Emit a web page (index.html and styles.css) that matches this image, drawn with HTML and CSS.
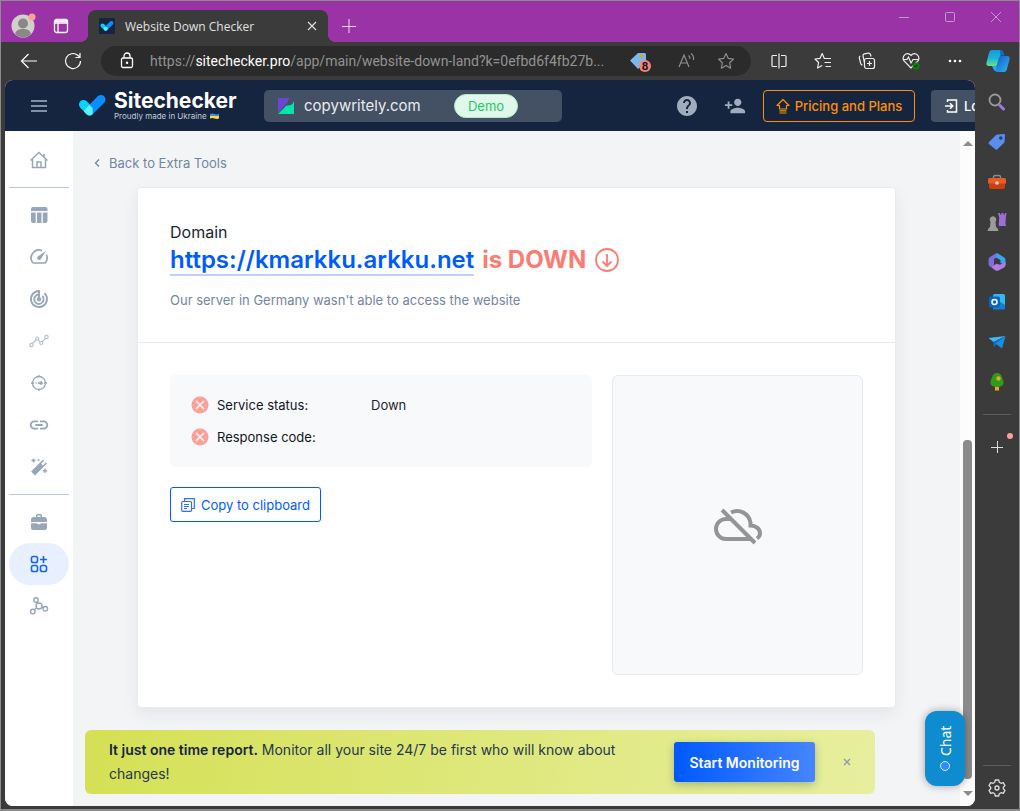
FILE: index.html
```html
<!DOCTYPE html>
<html lang="en">
<head>
  <meta charset="UTF-8">
  <meta name="viewport" content="width=device-width, initial-scale=1.0">
  <title>Website Down Checker</title>
  <link rel="stylesheet" href="styles.css">
</head>
<body>
<div class="window">
  <header class="titlebar">
    <button class="profile" aria-label="Profile">
      <svg width="26" height="26" viewBox="0 0 26 26"><circle cx="12" cy="14" r="11.500" fill="#d2d0cc"/><circle cx="12" cy="11.500" r="5" fill="#8a8886"/><path d="M4 22c1-4 4-5 8-5s7 1 8 5a11.500 11.500 0 0 1-16 0z" fill="#8a8886"/><circle cx="21" cy="5" r="3.500" fill="#f9a19a"/></svg>
    </button>
    <button class="workspaces" aria-label="Tab actions">
      <svg width="16" height="16" viewBox="0 0 16 16" fill="none" stroke="#fff" stroke-width="1.300"><rect x="1.500" y="1.500" width="13" height="13" rx="2"/><path d="M1.500 5h13M5 5v9.500"/><path d="M2 3.200h12" stroke-width="2"/></svg>
    </button>
    <div class="tab">
      <svg width="16" height="16" viewBox="0 0 16 16"><rect width="16" height="16" rx="1" fill="#15253f"/><path d="M3.500 7.500l3 3" stroke="#00d5ff" stroke-width="4" stroke-linecap="round"/><path d="M6.800 10.600l5.600-5.600" stroke="#0a8dff" stroke-width="4" stroke-linecap="round"/><circle cx="6.700" cy="10.700" r="2" fill="#5ff0ff"/></svg>
      <span class="tab-title">Website Down Checker</span>
      <button aria-label="Close tab"><svg width="10" height="10" viewBox="0 0 10 10" stroke="#ddd" stroke-width="1.200"><path d="M1 1l8 8M9 1l-8 8"/></svg></button>
    </div>
    <button class="new-tab" aria-label="New tab"><svg width="14" height="14" viewBox="0 0 14 14" stroke="#f5dcf8"><path d="M7 0v14M0 7.500h14"/></svg></button>
    <div class="window-buttons">
      <button aria-label="Minimize"><svg width="12" height="12" viewBox="0 0 12 12" stroke="#cb93d2"><path d="M1 6.500h10"/></svg></button>
      <button aria-label="Maximize"><svg width="12" height="12" viewBox="0 0 12 12" fill="none" stroke="#cb93d2"><rect x="1.500" y="1.500" width="9" height="9" rx="1"/></svg></button>
      <button aria-label="Close"><svg width="12" height="12" viewBox="0 0 12 12" stroke="#cb93d2"><path d="M1 1l10 10M11 1L1 11"/></svg></button>
    </div>
  </header>

  <nav class="toolbar">
    <button aria-label="Back"><svg width="18" height="18" viewBox="0 0 18 18" fill="none" stroke="#fff" stroke-width="1.200"><path d="M17 9H1.500M8.500 2l-7 7 7 7"/></svg></button>
    <button aria-label="Refresh"><svg width="18" height="18" viewBox="0 0 18 18" fill="none" stroke="#fff" stroke-width="1.200"><path d="M16.500 9a7.500 7.500 0 1 1-2.800-5.800l2 1.800M16 1v4.500h-4.500"/></svg></button>
    <div class="address">
      <svg class="lock" width="14" height="18" viewBox="0 0 14 18" fill="none" stroke="#fff" stroke-width="1.300"><rect x="1.500" y="6" width="11" height="9.500" rx="1.500"/><path d="M4 6V4a3 3 0 0 1 6 0v2"/><circle cx="7" cy="10.800" r=".6" fill="#fff"/></svg>
      <div class="url">https://<b>sitechecker.pro</b>/app/main/website-down-land?k=0efbd6f4fb27b...</div>
      <button class="coupon" aria-label="Shopping">
        <svg width="22" height="20" viewBox="0 0 22 20"><path d="M1 9.500l8-7.500h7l1 1v8l-8 7z" fill="#7fb6ea"/><circle cx="12.500" cy="5" r="1.800" fill="#d3a53d"/></svg>
        <span>8</span>
      </button>
      <button class="reader" aria-label="Read aloud"><svg width="18" height="16" viewBox="0 0 18 16" fill="none" stroke="#8e8e8e" stroke-width="1.200"><path d="M1 14L6 2l5 12M3 10h6M10.500 2.500c1.200.8 1.500 2.200 1.300 3.500M13 0.500c2.500 1.500 3 4 2.300 6.500"/></svg></button>
      <button class="favorite" aria-label="Add to favorites"><svg width="18" height="18" viewBox="0 0 18 18" fill="none" stroke="#8e8e8e" stroke-width="1.200" stroke-linejoin="round"><path d="M9 1.500l2.300 4.900 5.200.7-3.800 3.700.9 5.400L9 13.600l-4.600 2.600.9-5.400L1.500 7.100l5.200-.7z"/></svg></button>
    </div>
    <button aria-label="Split screen"><svg width="16" height="16" viewBox="0 0 16 16" fill="none" stroke="#eee" stroke-width="1.200"><path d="M6 2.500H2q-1 0-1 1v9q0 1 1 1h4M10 2.500h4q1 0 1 1v9q0 1-1 1h-4M8 .5v15"/></svg></button>
    <button aria-label="Favorites"><svg width="18" height="18" viewBox="0 0 18 18" fill="none" stroke="#eee" stroke-width="1.200" stroke-linejoin="round"><path d="M17 6.500H10.300L8.200 1.500 6 6.300l-5 .7 3.600 3.500-1 5.500 4.600-2.600M10.500 10.500H17M11.500 14.500H17"/></svg></button>
    <button aria-label="Collections"><svg width="18" height="18" viewBox="0 0 18 18" fill="none" stroke="#eee" stroke-width="1.200"><rect x="6.500" y="6.500" width="10" height="10" rx="2"/><path d="M11.500 9v5M9 11.500h5M4.500 13c-1 0-1.500-.5-1.800-1.500L1.300 6c-.2-1 .2-1.700 1-2M6.500 11L5 3.600c0-1 .4-1.600 1.300-1.800l4.200-.6c1.200-.1 1.700.4 2 1.300l.5 2"/></svg></button>
    <button aria-label="Performance"><svg width="18" height="18" viewBox="0 0 18 18" fill="none" stroke="#eee" stroke-width="1.200"><path d="M9 16L2.300 9.200C-1 5 4-.5 8 2.500l1 1 1-1c4-3 9 2.500 5.700 6.700L9 16zM1 7.500h4l1.500-2.500 2.500 6 2-3.500h6"/><circle cx="14" cy="14" r="3.500" fill="#107c10" stroke="none"/><path d="M12.500 14l1 1 2-2" stroke="#0b3f0b"/></svg></button>
    <button aria-label="Settings and more"><svg width="14" height="4" viewBox="0 0 14 4" fill="#fff"><circle cx="2" cy="2" r="1.300"/><circle cx="7" cy="2" r="1.300"/><circle cx="12" cy="2" r="1.300"/></svg></button>
    <button class="copilot" aria-label="Copilot">
      <svg width="24" height="24" viewBox="0 0 24 24">
        <defs>
          <linearGradient id="cop1" x1="0" y1="0" x2="0" y2="1"><stop offset="0" stop-color="#1696e0"/><stop offset=".5" stop-color="#19b5d8"/><stop offset="1" stop-color="#6be08a"/></linearGradient>
          <linearGradient id="cop2" x1="0" y1="0" x2="1" y2="1"><stop offset="0" stop-color="#1458c8"/><stop offset="1" stop-color="#2db8f2"/></linearGradient>
        </defs>
        <path d="M6 1h8q2 0 1.500 2L12 15q-.6 2-3 2H3q-3 0-2.600-3L3 4q.7-3 3-3z" fill="url(#cop1)"/>
        <path d="M14 1h1q2 0 2.500 2l1 3.500h-4z" fill="#1267c9"/>
        <path d="M15.500 7H21q3 0 2.600 3L21 20q-.7 3-3 3h-7q-2 0-1.500-2l3.300-12q.5-2 2.700-2z" fill="url(#cop2)"/>
        <path d="M6 17h5l-1 5q-2 0-2.600-2z" fill="#26a9ec"/>
      </svg>
    </button>
  </nav>

  <div class="browser-body">
    <div class="page">
      <header class="topbar">
        <button class="menu" aria-label="Menu"><svg width="16" height="12" viewBox="0 0 16 12" stroke="#a5b2c4" stroke-width="1.600"><path d="M0 1h16M0 6h16M0 11h16"/></svg></button>
        <a class="logo" href="#">
          <svg width="30" height="26" viewBox="0 0 30 26"><path d="M5.500 11.500L11 17" stroke="#00d5ff" stroke-width="9" stroke-linecap="round"/><path d="M11.500 18L23 6.500" stroke="#0a8dff" stroke-width="9" stroke-linecap="round"/><path d="M8.300 14.700l3-3 3.400 3.400 0 6q-3.200 3-6.400 0l-2.500-2.600z" fill="#5ff0ff"/></svg>
          <span class="logo-text">
            <strong>Sitechecker</strong>
            <small>Proudly made in Ukraine <svg width="9" height="6" viewBox="0 0 9 6"><path d="M0 1q2-1 4.500 0T9 .5V3H0z" fill="#3f8fe8"/><path d="M0 3h9v2.500q-2 .8-4.500 0T0 5.500z" fill="#ffd83b"/></svg></small>
          </span>
        </a>
        <button class="site">
          <svg width="16" height="16" viewBox="0 0 16 16"><path d="M0 0h12.500q-2 .5-2.500 4L0 15z" fill="#6a45d8"/><path d="M16 3v13H0L8.500 7.500Q14.500 8 16 3z" fill="#00e6a8"/></svg>
          <span>copywritely.com</span>
          <em>Demo</em>
        </button>
        <button class="help" aria-label="Help"><svg width="24" height="24" viewBox="0 0 24 24" fill="#a0acbd"><path d="M12 2C6.480 2 2 6.480 2 12s4.480 10 10 10 10-4.480 10-10S17.520 2 12 2zm1 17h-2v-2h2v2zm2.070-7.750l-.9.920C13.450 12.900 13 13.500 13 15h-2v-.5c0-1.100.450-2.100 1.170-2.830l1.240-1.260c.370-.360.590-.860.590-1.410 0-1.100-.9-2-2-2s-2 .9-2 2H8c0-2.210 1.790-4 4-4s4 1.790 4 4c0 .880-.360 1.680-.930 2.250z"/></svg></button>
        <button class="invite" aria-label="Add user"><svg width="22" height="22" viewBox="0 0 24 24" fill="#a0acbd"><path d="M15 12c2.210 0 4-1.790 4-4s-1.790-4-4-4-4 1.790-4 4 1.790 4 4 4zm-9-2V7H4v3H1v2h3v3h2v-3h3v-2H6zm9 4c-2.670 0-8 1.340-8 4v2h16v-2c0-2.660-5.330-4-8-4z"/></svg></button>
        <button class="pricing"><svg width="14" height="16" viewBox="0 0 14 16" fill="none" stroke="#ff9100" stroke-width="1.200" stroke-linejoin="round"><path d="M7 1.500L1 7.500h2.500v3.500h7V7.500H13zM3.500 12.800h7M3.500 15h7"/></svg>Pricing and Plans</button>
        <button class="logout"><svg width="14" height="14" viewBox="0 0 14 14" fill="none" stroke="#fff" stroke-width="1.500"><path d="M3.500 3V1H12.500v12H3.500v-2M1 7h7.500M6 4.200L8.800 7 6 9.800"/></svg>Log out</button>
      </header>

      <div class="app">
        <nav class="menu-rail">
          <a href="#" aria-label="Home"><svg width="20" height="20" viewBox="0 0 20 20" fill="none" stroke="#98a6b9" stroke-width="1.500"><path d="M3.500 9v8.500h13V9M1.500 10.500L10 2.500l8.500 8M8 17.500V12h4v5.500M15 4v3"/></svg></a>
          <hr>
          <a href="#" aria-label="Dashboard"><svg width="20" height="20" viewBox="0 0 20 20" fill="#98a6b9"><path d="M2 6V4q0-2 2-2h12.500q2 0 2 2v2zM2 7.500h4.700V18H4q-2 0-2-2zM8 7.500h4.500V18H8zM13.800 7.500h4.700V16q0 2-2 2h-2.700z"/></svg></a>
          <a href="#" aria-label="Audit"><svg width="20" height="20" viewBox="0 0 20 20" fill="none" stroke="#98a6b9" stroke-width="1.700"><path d="M13 3.600A8 8 0 0 0 3.500 15.500q.5.500 1.200.5h11q.8 0 1.200-.8a8 8 0 0 0 .5-7.700"/><path d="M16.800 4l-5 8.300a2 2 0 0 1-3-2.800z" fill="#98a6b9" stroke="none"/></svg></a>
          <a href="#" aria-label="Monitoring"><svg width="20" height="20" viewBox="0 0 20 20" fill="none" stroke="#98a6b9" stroke-width="1.900"><path d="M10 10V2a8 8 0 1 0 5.500 2.200M10 5.500a4.700 4.700 0 1 0 3.300 1.400"/><circle cx="10" cy="10.200" r="1.300"/></svg></a>
          <a href="#" aria-label="Rank tracker"><svg width="20" height="14" viewBox="0 0 20 14" fill="none" stroke="#b5c0ce" stroke-width="1.200"><circle cx="2.500" cy="11" r="1.700"/><circle cx="8.300" cy="4.500" r="1.500"/><circle cx="12.200" cy="9" r="1.500"/><circle cx="17.500" cy="3" r="1.700"/><path d="M3.500 9.500l4-4M9.200 5.800l2 2M13.200 7.800l3.300-3.500"/></svg></a>
          <a href="#" aria-label="Traffic"><svg width="18" height="18" viewBox="0 0 18 18" fill="none" stroke="#98a6b9" stroke-width="1.300"><circle cx="9" cy="9" r="6.500"/><path d="M9 1v2M9 15v2M1 9h3M14 9h3M5.500 9h1.200M7.800 9H11"/><circle cx="11" cy="9" r="1.200" fill="#98a6b9"/></svg></a>
          <a href="#" aria-label="Backlinks"><svg width="22" height="22" viewBox="0 0 24 24" fill="#98a6b9"><path d="M3.900 12c0-1.710 1.390-3.100 3.100-3.100h4V7H7c-2.760 0-5 2.240-5 5s2.240 5 5 5h4v-1.900H7c-1.710 0-3.100-1.390-3.100-3.100zM8 13h8v-2H8v2zm9-6h-4v1.900h4c1.710 0 3.100 1.390 3.100 3.100s-1.390 3.100-3.100 3.100h-4V17h4c2.760 0 5-2.240 5-5s-2.240-5-5-5z"/></svg></a>
          <a href="#" aria-label="Optimize"><svg width="20" height="20" viewBox="0 0 20 20"><path d="M4 16.500L16 4.500" stroke="#98a6b9" stroke-width="5.500"/><path d="M13 7.500l3-3" stroke="#fff" stroke-width="2.500"/><path d="M4.500 1.500v4M2.500 3.500h4M16 11.500v4.500M13.800 13.800h4.500M8.500 3h2" stroke="#98a6b9" stroke-width="1.400"/></svg></a>
          <hr>
          <a href="#" aria-label="Projects"><svg width="18" height="18" viewBox="0 0 18 18" fill="#98a6b9"><path d="M4 4h2V2.500Q6 1 7.500 1h3Q12 1 12 2.500V4h2q3 0 3 3v2H1V7q0-3 3-3zm3.500 0h3V2.500h-3zM1 10.300h6.500v1h3v-1H17V15q0 2-2 2H3q-2 0-2-2z"/></svg></a>
          <a class="active" href="#" aria-label="Extra tools"><svg width="18" height="18" viewBox="0 0 18 18" fill="none" stroke="#1463ff" stroke-width="1.600"><rect x="1.500" y="1.500" width="6" height="6" rx="1.800"/><rect x="1.500" y="10.500" width="6" height="6" rx="1.800"/><rect x="10.500" y="10.500" width="6" height="6" rx="1.800"/><path d="M13.500 1v7M10 4.500h7"/></svg></a>
          <a href="#" aria-label="Integrations"><svg width="20" height="20" viewBox="0 0 20 20" fill="none" stroke="#98a6b9" stroke-width="1.400"><circle cx="7" cy="4" r="2.200"/><circle cx="10" cy="10" r="3"/><circle cx="3.800" cy="15.500" r="2.300"/><circle cx="16.300" cy="12.800" r="2.300"/><path d="M8 6l.8 1.500M7.600 11.700L5.500 13.700M12.900 11l1.300.6"/></svg></a>
        </nav>

        <main class="content">
          <a class="back" href="#"><svg width="6" height="8" viewBox="0 0 6 8" fill="none" stroke="#73859f" stroke-width="1.300"><path d="M5 0.500L1.500 4 5 7.500"/></svg>Back to Extra Tools</a>

          <section class="card">
            <div class="card-head">
              <p class="label">Domain</p>
              <h1>
                <a href="#">https://kmarkku.arkku.net</a>
                <span>is DOWN</span>
                <svg width="26" height="26" viewBox="0 0 26 26" fill="none" stroke="#fb7c73" stroke-width="1.800"><circle cx="13" cy="12" r="11"/><path d="M13 6v12M8.500 13.500L13 18l4.500-4.500"/></svg>
              </h1>
              <p class="note">Our server in Germany wasn't able to access the website</p>
            </div>
            <div class="card-body">
              <div class="result">
                <dl class="status">
                  <div>
                    <dt><svg width="18" height="18" viewBox="0 0 18 18"><circle cx="9" cy="9" r="8.500" fill="#fca19a"/><path d="M5 5l8 8M13 5l-8 8" stroke="#fff" stroke-width="1.400"/></svg>Service status:</dt>
                    <dd>Down</dd>
                  </div>
                  <div>
                    <dt><svg width="18" height="18" viewBox="0 0 18 18"><circle cx="9" cy="9" r="8.500" fill="#fca19a"/><path d="M5 5l8 8M13 5l-8 8" stroke="#fff" stroke-width="1.400"/></svg>Response code:</dt>
                    <dd></dd>
                  </div>
                </dl>
                <button class="copy"><svg width="14" height="14" viewBox="0 0 14 14" fill="none" stroke="#2b70ff" stroke-width="1.200"><rect x="0.700" y="3.500" width="9.800" height="9.800" rx="1"/><path d="M3.500 3.500V.7h9.800v9.800h-2.800M3 6.500h5M3 8.500h5M3 10.500h3"/></svg>Copy to clipboard</button>
              </div>
              <div class="preview">
                <svg width="48" height="48" viewBox="0 0 48 48" fill="none" stroke="#959595" stroke-width="4"><path d="M17 16h-5a10 10 0 0 0 0 20h26M17 9.500C25.500 5.500 35 10.500 36.500 19.500v3c5 0 9.500 3 9.500 8 0 2-1 3.500-3 5M8 7l33 33"/></svg>
              </div>
            </div>
          </section>

          <div class="banner">
            <p><b>It just one time report.</b> Monitor all your site 24/7 be first who will know about changes!</p>
            <button class="start">Start Monitoring</button>
            <button class="dismiss" aria-label="Close"><svg width="8" height="8" viewBox="0 0 8 8" stroke="#8d9bb0" stroke-width="1.400"><path d="M1 1l6 6M7 1L1 7"/></svg></button>
          </div>
        </main>

        <div class="scrollbar">
          <svg width="10" height="5" viewBox="0 0 10 5" fill="#8b8b8b"><path d="M5 0l5 5H0z"/></svg>
          <div class="track"><div class="thumb"></div></div>
          <svg width="10" height="5" viewBox="0 0 10 5" fill="#8b8b8b"><path d="M5 5L0 0h10z"/></svg>
        </div>
        <button class="chat"><i></i>Chat</button>
      </div>
    </div>

    <aside class="edge-bar">
      <button aria-label="Search"><svg width="18" height="18" viewBox="0 0 18 18" fill="none"><circle cx="7" cy="7" r="5.500" stroke="#9a9a9a" stroke-width="1.800"/><path d="M12 12.500l3.500 3.500" stroke="#a279dc" stroke-width="3" stroke-linecap="round"/></svg></button>
      <button aria-label="Shopping"><svg width="18" height="18" viewBox="0 0 18 18"><path d="M1 9l7-7q.5-.5 1.500-.5L16 1q1 0 1 1l-.5 6.500q0 1-.6 1.500l-6.500 6.300q-1 1-2 0L1 11q-1-1 0-2z" fill="#5b8def"/><circle cx="12.800" cy="5" r="1.800" fill="#1d3f7d"/></svg></button>
      <button aria-label="Tools"><svg width="18" height="16" viewBox="0 0 18 16"><path d="M5.500 5V3q0-1.500 1.500-1.500h4q1.500 0 1.500 1.500v2" fill="none" stroke="#8c8c8c" stroke-width="1.400"/><rect y="4" width="18" height="6" rx="1.500" fill="#ea5a22"/><path d="M1 9.500h16V13q0 2-2 2H3q-2 0-2-2z" fill="#c9400f"/><circle cx="9" cy="9" r="1.800" fill="#e4d6d0"/></svg></button>
      <button aria-label="Games"><svg width="20" height="20" viewBox="0 0 20 20"><path d="M11 1h2v1.500h1.500V1h2v1.500H18V1h1.500l-.7 4.500L18.500 12l.7 2h-7.500l.5-8.500z" fill="#9b6fd6"/><path d="M3.500 9.500a3.200 3.200 0 1 1 5 0L9 15q2 1 2.500 4H.5Q1 16 3 15z" fill="#9b9b9b"/></svg></button>
      <button aria-label="Microsoft 365"><svg width="18" height="18" viewBox="0 0 18 18"><path d="M8.500 0L2 4Q.5 5 .5 7v4q0 2.500 2.500 3l3-1.500V6l6-3.500z" fill="#7b6fe0"/><path d="M9 0l6.500 4Q17.500 5 17.500 7v5l-5-2V7L8 4.500z" fill="#3aa5ee"/><path d="M3 14l5.500-3.300 3.500 1L17.500 9v3q0 1.500-1.500 2.500L10.500 17.500q-1.500.7-3 0z" fill="#b47be0"/></svg></button>
      <button aria-label="Outlook"><svg width="18" height="18" viewBox="0 0 18 18"><rect x="5" y="1" width="12" height="15" rx="1.500" fill="#35b8f1"/><path d="M11 8l6 4v3q0 1.500-1.500 1.500H5V12z" fill="#1181ce"/><rect x="1" y="3.500" width="11" height="11" rx="1.500" fill="#0a66bd"/><circle cx="6.500" cy="9" r="2.500" fill="none" stroke="#fff" stroke-width="1.500"/></svg></button>
      <button aria-label="Drop"><svg width="18" height="16" viewBox="0 0 18 16"><path d="M17.500 2L.5 4l5 4z" fill="#43b9f5"/><path d="M17.500 2l-12 6v5l3-2.500z" fill="#0f6fc0"/><path d="M17.500 2L14 14.500 7.500 9.500z" fill="#198fe0"/></svg></button>
      <button aria-label="E-tree"><svg width="16" height="20" viewBox="0 0 16 20"><rect x="6" y="14" width="4" height="4.500" fill="#f0a31c"/><path d="M8 1q4 0 5 4.500Q15 9 14.500 12q-1.500 3-6.500 3t-6.500-3Q1 9 3 5.500 4 1 8 1z" fill="#2f9a1b"/><circle cx="9.500" cy="6.500" r="2.200" fill="#f5a31c"/></svg></button>
      <hr>
      <button class="add" aria-label="Customize"><svg width="12" height="12" viewBox="0 0 12 12" stroke="#ddd"><path d="M6.500 0v12M0 6.500h12"/></svg></button>
      <hr class="lower">
      <button aria-label="Settings"><svg width="18" height="18" viewBox="0 0 18 18" fill="none" stroke="#ddd" stroke-width="1.300" stroke-linejoin="round"><path d="M7.300 1h3.400l.6 2.300 1.700 1 2.300-.7 1.700 3-1.700 1.600v1.600l1.700 1.600-1.700 3-2.300-.7-1.700 1-.6 2.300H7.300l-.6-2.300-1.700-1-2.300.7-1.700-3 1.700-1.600V8.200L1 6.600l1.700-3 2.300.7 1.700-1z"/><circle cx="9" cy="9" r="2"/></svg></button>
    </aside>
  </div>
</div>
</body>
</html>
```

FILE: styles.css
```css
* {
  box-sizing: border-box;
}
body {
  margin: 0;
  font-family: Inter, "Open Sans", sans-serif;
  font-size: 13px;
  color: #1c2430;
  background: #8c8c8c;
}
button {
  border: none;
  background: none;
  padding: 0;
  font-family: inherit;
  cursor: pointer;
}
a {
  text-decoration: none;
}
p {
  margin: 0;
}
svg {
  display: block;
  flex-shrink: 0;
}

/* browser window */
.window {
  min-height: 100vh;
  display: flex;
  flex-direction: column;
  background: #3b3b3b;
  border: 1px solid #8c8c8c;
  border-bottom-width: 2px;
}
.titlebar {
  height: 41px;
  display: flex;
  align-items: flex-end;
  background: #9933a6;
  font-family: "Open Sans", sans-serif;
}
.profile {
  margin: 0 0 4px 10px;
}
.workspaces {
  margin: 0 19px 8px 16px;
}
.tab {
  position: relative;
  width: 240px;
  height: 32px;
  padding: 0 11px;
  display: flex;
  align-items: center;
  gap: 10px;
  background: #3b3b3b;
  border-radius: 8px 8px 0 0;
}
.tab::before,
.tab::after {
  content: "";
  position: absolute;
  bottom: 0;
  width: 8px;
  height: 8px;
}
.tab::before {
  right: 100%;
  background: radial-gradient(circle at 0 0, #9933a6 8px, #3b3b3b 8px);
}
.tab::after {
  left: 100%;
  background: radial-gradient(circle at 100% 0, #9933a6 8px, #3b3b3b 8px);
}
.tab-title {
  flex: 1;
  font-size: 12px;
  color: #e0e0e0;
}
.new-tab {
  margin: 0 0 9px 14px;
}
.window-buttons {
  align-self: flex-start;
  margin-left: auto;
  display: flex;
}
.window-buttons button {
  width: 46px;
  height: 32px;
  display: flex;
  align-items: center;
  justify-content: center;
}
.toolbar {
  height: 38px;
  padding-left: 6px;
  display: flex;
  align-items: center;
}
.toolbar > button {
  width: 44px;
  height: 38px;
  flex-shrink: 0;
  display: flex;
  align-items: center;
  justify-content: center;
}
.toolbar > .copilot {
  width: 42px;
}
.address {
  flex: 1;
  min-width: 0;
  height: 30px;
  margin: 0 6px;
  padding: 0 16px 0 19px;
  display: flex;
  align-items: center;
  background: #2b2b2b;
  border-radius: 15px;
}
.url {
  flex: 1;
  min-width: 0;
  margin-left: 16px;
  overflow: hidden;
  white-space: nowrap;
  font-family: Roboto, "Open Sans", sans-serif;
  font-size: 14px;
  color: #929292;
}
.url b {
  font-weight: 400;
  color: #fff;
}
.coupon {
  position: relative;
  margin-left: 16px;
}
.coupon span {
  position: absolute;
  right: 0;
  bottom: -1px;
  width: 12px;
  height: 12px;
  border-radius: 50%;
  background: #f4857d;
  color: #111;
  font-size: 10px;
  font-weight: 700;
  line-height: 12px;
}
.reader {
  margin-left: 27px;
}
.favorite {
  margin-left: 21px;
}
.browser-body {
  flex: 1;
  display: flex;
  padding-bottom: 3px;
}

/* side bar of the browser */
.edge-bar {
  width: 44px;
  padding-top: 2px;
  display: flex;
  flex-direction: column;
  align-items: center;
  margin-bottom: -2px;
}
.edge-bar button {
  position: relative;
  width: 44px;
  height: 40px;
  display: flex;
  align-items: center;
  justify-content: center;
}
.edge-bar hr {
  width: 28px;
  margin: 12px 0;
  border: none;
  border-top: 1px solid #5c5c5c;
}
.edge-bar .lower {
  margin: auto 0 2px;
}
.add::after {
  content: "";
  position: absolute;
  top: 6px;
  right: 6px;
  width: 6px;
  height: 6px;
  border-radius: 50%;
  background: #f9a19a;
}

/* page */
.page {
  flex: 1;
  min-width: 0;
  margin-left: 4px;
  display: flex;
  flex-direction: column;
  overflow: hidden;
  border-radius: 8px;
  background: #f3f4f6;
}
.topbar {
  height: 51px;
  padding-left: 26px;
  display: flex;
  align-items: center;
  background: #15253f;
}
.topbar > * {
  flex-shrink: 0;
}
.logo {
  width: 158px;
  margin: 0 28px 0 31px;
  display: flex;
  align-items: center;
  gap: 6px;
  color: #fff;
}
.logo-text strong {
  display: block;
  font-size: 21px;
  line-height: 20px;
  font-weight: 700;
}
.logo-text small {
  display: flex;
  align-items: center;
  gap: 3px;
  font-size: 8px;
  line-height: 10px;
  white-space: nowrap;
  color: #c3cad5;
}
.site {
  width: 298px;
  height: 32px;
  padding: 0 44px 0 14px;
  display: flex;
  align-items: center;
  gap: 10px;
  background: #445063;
  border-radius: 5px;
  color: #e8ebef;
  font-size: 15px;
}
.site em {
  width: 64px;
  margin-left: auto;
  border: 1px solid #b0ecc6;
  border-radius: 12px;
  background: #e0f8e9;
  color: #1ec96b;
  font-size: 13px;
  font-style: normal;
  line-height: 22px;
}
.help {
  margin-left: 113px;
}
.invite {
  margin: 0 17px 0 25px;
}
.pricing,
.logout {
  height: 32px;
  display: flex;
  align-items: center;
  border-radius: 4px;
  font-size: 13px;
  font-weight: 500;
}
.pricing {
  width: 152px;
  justify-content: center;
  gap: 5px;
  border: 1px solid #ff9100;
  color: #ff9100;
}
.logout {
  width: 90px;
  margin-left: 16px;
  padding-left: 13px;
  gap: 6px;
  background: #445063;
  color: #fff;
}
.app {
  position: relative;
  flex: 1;
  display: flex;
}
.menu-rail {
  width: 68px;
  padding: 8px 4px;
  background: #fff;
}
.menu-rail a {
  height: 42px;
  display: flex;
  align-items: center;
  justify-content: center;
  border-radius: 21px;
}
.menu-rail .active {
  background: #e8f0ff;
}
.menu-rail hr {
  margin: 6px 0;
  border: none;
  border-top: 1px solid #bcc8d3;
}
.content {
  flex: 1;
  min-width: 0;
  padding: 24px 64px 12px;
  display: flex;
  flex-direction: column;
}
.back {
  align-self: flex-start;
  margin-left: -43px;
  display: flex;
  align-items: center;
  gap: 9px;
  color: #73859f;
  font-size: 13px;
  line-height: 16px;
}
.card {
  margin-top: 16px;
  border: 1px solid #e9ebf0;
  border-radius: 4px;
  background: #fff;
  box-shadow: 0 6px 16px rgba(30, 40, 60, 0.07);
}
.card-head {
  padding: 32px;
  border-bottom: 1px solid #e6e8ee;
}
.label {
  font-size: 16px;
  line-height: 24px;
}
h1 {
  margin: 0;
  display: flex;
  align-items: center;
  font-size: 24px;
  line-height: 32px;
  font-weight: 700;
}
h1 a {
  border-bottom: 2px solid #bcd3ff;
  line-height: 28px;
  font-weight: 600;
  color: #005bff;
}
h1 span {
  margin: 0 8px;
  padding-bottom: 2px;
  color: #fb7c73;
}
.note {
  margin-top: 12px;
  font-size: 13px;
  line-height: 20px;
  color: #73859f;
}
.card-body {
  padding: 32px;
  display: flex;
  gap: 20px;
}
.result {
  flex: 1;
}
.status {
  margin: 0 0 20px;
  padding: 14px 21px;
  background: #f8f9fb;
  border-radius: 5px;
}
.status div {
  height: 32px;
  display: flex;
  align-items: center;
}
.status dt {
  width: 180px;
  display: flex;
  align-items: center;
  gap: 8px;
  color: #10151f;
}
.status dd {
  margin: 0;
}
.copy {
  width: 151px;
  height: 35px;
  display: flex;
  align-items: center;
  justify-content: center;
  gap: 6px;
  border: 1px solid #005bff;
  border-radius: 3px;
  color: #005bff;
  font-size: 13px;
}
.preview {
  width: 251px;
  height: 300px;
  padding-top: 4px;
  display: flex;
  align-items: center;
  justify-content: center;
  border: 1px solid #e6e9ee;
  border-radius: 6px;
  background: #f8f9fb;
}
.banner {
  margin: auto 21px 0 -52px;
  padding: 8px 24px;
  display: flex;
  align-items: center;
  border-radius: 6px;
  background: linear-gradient(100deg, #d5e055, #e7ef9f);
  color: #26384d;
  font-size: 14px;
  line-height: 24px;
}
.banner p {
  flex: 1;
}
.banner b {
  font-weight: 600;
  color: #15253f;
}
.start {
  width: 141px;
  height: 40px;
  margin: 0 28px 0 40px;
  border-radius: 3px;
  background: linear-gradient(90deg, #0059ff, #4585ff);
  box-shadow: 0 3px 8px rgba(40, 60, 90, 0.3);
  color: #fff;
  font-size: 14px;
  font-weight: 600;
}
.scrollbar {
  width: 15px;
  padding: 10px 0;
  display: flex;
  flex-direction: column;
  align-items: center;
  background: #fcfcfc;
}
.track {
  flex: 1;
  width: 9px;
  margin: 6px 0 12px;
  display: flex;
  align-items: flex-end;
}
.thumb {
  width: 9px;
  height: 54%;
  border-radius: 4px;
  background: #8b8b8b;
}
.chat {
  position: absolute;
  right: 10px;
  bottom: 20px;
  width: 40px;
  height: 75px;
  display: flex;
  align-items: center;
  justify-content: center;
  gap: 5px;
  writing-mode: vertical-rl;
  transform: rotate(180deg);
  border-radius: 12px;
  background: #0f8bd0;
  box-shadow: 0 0 8px rgba(0, 0, 0, 0.35);
  color: #fff;
  font-family: "Noto Sans", sans-serif;
  font-size: 14px;
}
.chat i {
  width: 10px;
  height: 10px;
  border: 1px solid #d8ecff;
  border-radius: 50%;
  background: #2d8cff;
}
```
